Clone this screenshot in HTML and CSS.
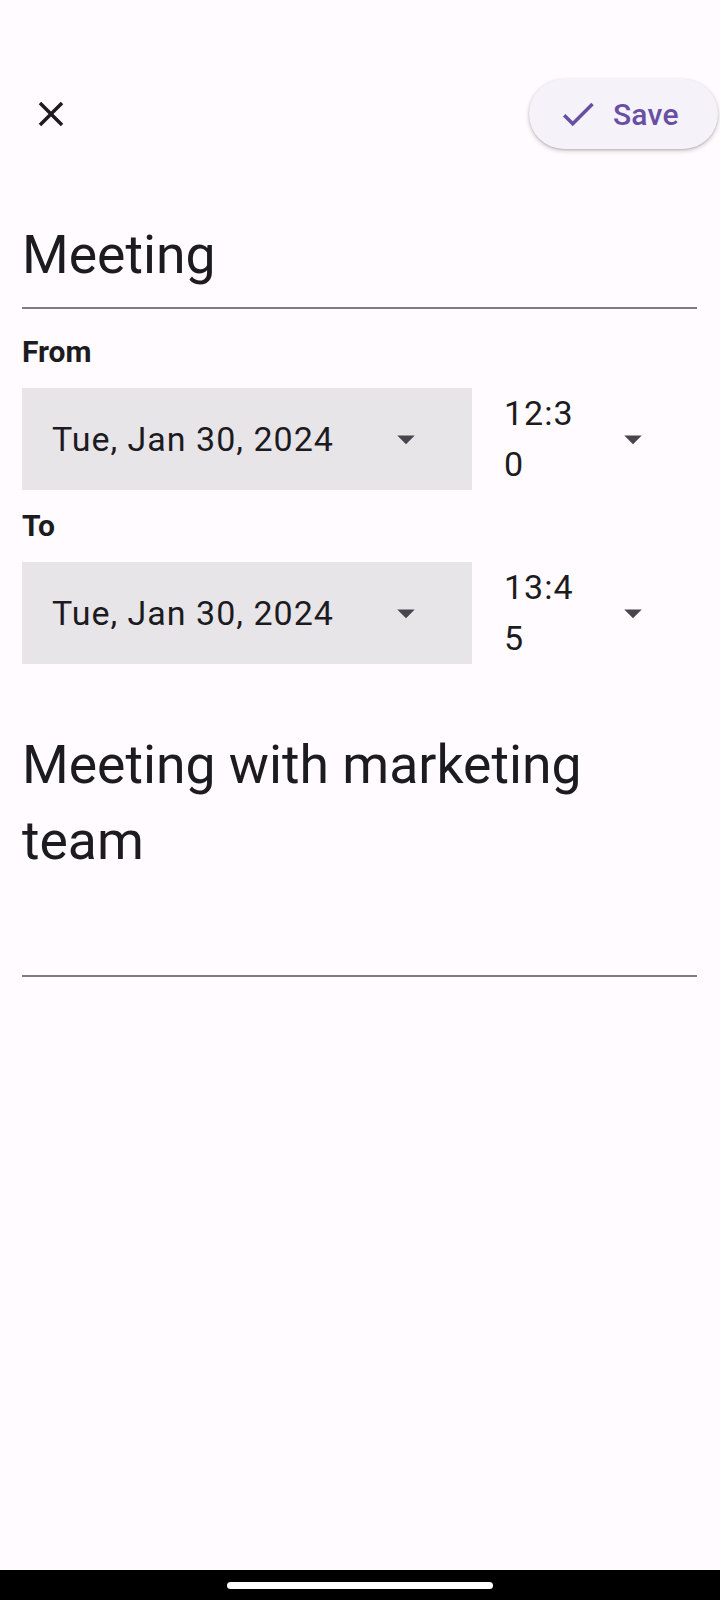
FILE: index.html
```html
<!DOCTYPE html>
<html lang="en">
<head>
<meta charset="utf-8">
<title>Edit event</title>
<link rel="stylesheet" href="styles.css">
</head>
<body>
<div class="screen">
  <div class="status"></div>
  <header class="topbar">
    <button class="icon-btn" aria-label="Close">
      <svg width="42" height="42" viewBox="0 0 24 24"><path fill="#1c1b1f" d="M19 6.41L17.59 5 12 10.59 6.41 5 5 6.41 10.59 12 5 17.59 6.41 19 12 13.41 17.59 19 19 17.59 13.41 12z"/></svg>
    </button>
    <button class="save-btn">
      <svg width="42" height="42" viewBox="0 0 24 24"><path fill="#6750a4" d="M9 16.17L4.83 12l-1.42 1.41L9 19 21 7l-1.41-1.41z"/></svg>
      <span class="save-label">Save</span>
    </button>
  </header>

  <div class="field title-field"><span class="title-text">Meeting</span></div>

  <div class="label label-first">From</div>
  <div class="row">
    <div class="date-box">
      <span class="date-text">Tue, Jan 30, 2024</span>
      <svg class="drop" width="42" height="42" viewBox="0 0 24 24"><path fill="#49454f" d="M7 10l5 5 5-5z"/></svg>
    </div>
    <div class="time-box">
      <span class="time-text">12:30</span>
      <svg class="drop-time" width="42" height="42" viewBox="0 0 24 24"><path fill="#49454f" d="M7 10l5 5 5-5z"/></svg>
    </div>
  </div>

  <div class="label">To</div>
  <div class="row">
    <div class="date-box">
      <span class="date-text">Tue, Jan 30, 2024</span>
      <svg class="drop" width="42" height="42" viewBox="0 0 24 24"><path fill="#49454f" d="M7 10l5 5 5-5z"/></svg>
    </div>
    <div class="time-box">
      <span class="time-text">13:45</span>
      <svg class="drop-time" width="42" height="42" viewBox="0 0 24 24"><path fill="#49454f" d="M7 10l5 5 5-5z"/></svg>
    </div>
  </div>

  <div class="field desc-field"><span class="desc-text">Meeting with marketing team</span></div>

  <div class="spacer"></div>
  <nav class="navbar"><div class="home-pill"></div></nav>
</div>
</body>
</html>
```

FILE: styles.css
```css
* { box-sizing: border-box; }
html, body {
  margin: 0;
  padding: 0;
  background: #fffbfe;
}
body {
  font-family: Roboto, "Noto Sans", sans-serif;
  color: #1c1b1f;
}
.screen {
  width: 720px;
  height: 1600px;
  display: flex;
  flex-direction: column;
  overflow: hidden;
}
.status {
  height: 79px;
  flex: none;
}
.topbar {
  height: 70px;
  flex: none;
  display: flex;
  align-items: center;
  justify-content: space-between;
  padding-left: 30px;
  padding-right: 2px;
}
.icon-btn {
  width: 42px;
  height: 42px;
  padding: 0;
  border: 0;
  background: transparent;
  display: flex;
}
.save-btn {
  width: 189px;
  height: 70px;
  border: 0;
  border-radius: 35px;
  background: #f6f2f9;
  box-shadow: 0 2px 4px 1px rgba(0,0,0,0.13), 0 1px 2px rgba(0,0,0,0.18);
  display: flex;
  align-items: center;
  padding: 0 0 0 28px;
  gap: 14px;
  font-family: Roboto, sans-serif;
}
.save-btn svg { flex: none; }
.save-label {
  font-size: 30px;
  font-weight: 500;
  color: #6750a4;
  letter-spacing: 0.2px;
}
.field {
  margin: 0 23px 0 22px;
  border-bottom: 2px solid #7f7b84;
}
.title-field {
  margin-top: 74px;
  padding-bottom: 20px;
}
.title-text {
  display: block;
  font-size: 53.5px;
  line-height: 64px;
}
.label {
  margin: 19px 0 19px 22px;
  font-size: 30px;
  font-weight: 700;
  line-height: 34px;
}
.label-first {
  margin-top: 26px;
}
.row {
  display: flex;
  height: 102px;
  margin-left: 22px;
}
.date-box {
  width: 450px;
  height: 102px;
  background: #e8e5e9;
  display: flex;
  align-items: center;
  padding-left: 30px;
  padding-right: 45px;
}
.date-text {
  flex: 1;
  font-size: 34px;
  letter-spacing: 1px;
  line-height: 40px;
}
.drop { flex: none; }
.time-box {
  display: flex;
  align-items: center;
  padding-left: 32px;
}
.time-text {
  width: 76px;
  font-size: 34px;
  letter-spacing: 1px;
  line-height: 51px;
  word-break: break-all;
}
.drop-time {
  flex: none;
  margin-left: 32px;
}
.desc-field {
  margin-top: 63px;
  padding-bottom: 96px;
}
.desc-text {
  display: block;
  max-width: 620px;
  font-size: 53.5px;
  line-height: 76px;
}
.spacer { flex: 1; }
.navbar {
  height: 30px;
  flex: none;
  background: #000;
  display: flex;
  justify-content: center;
  padding-top: 12px;
}
.home-pill {
  width: 266px;
  height: 7px;
  border-radius: 4px;
  background: #fff;
}
```
